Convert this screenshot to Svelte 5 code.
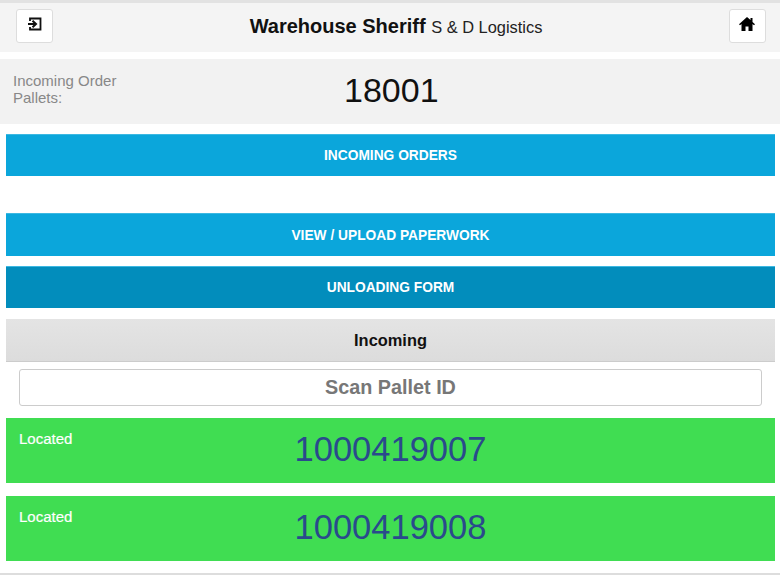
<script>
  const pallets = ['1000419007', '1000419008'];
</script>

<div class="page">
  <header class="topbar">
    <button class="icon-btn" aria-label="Log out">
      <svg width="16" height="16" viewBox="0 0 16 16">
        <path d="M3 5V2.500h10.500v11H3V11" fill="none" stroke="#111" stroke-width="1.8" />
        <path d="M1 8h7M5.500 4.800 9 8l-3.500 3.200" fill="none" stroke="#111" stroke-width="2" />
      </svg>
    </button>
    <h1><b>Warehouse Sheriff</b> <span>S &amp; D Logistics</span></h1>
    <button class="icon-btn" aria-label="Home">
      <svg width="16" height="14" viewBox="0 0 16 14">
        <path d="M8 0 0 7.200l1 1L2.500 7v7h4V9.500h3V14h4V7L15 8.200l1-1-2.500-2.300V1h-2v2.100z" fill="#000" />
      </svg>
    </button>
  </header>

  <section class="stat">
    <div class="stat-label">Incoming Order Pallets:</div>
    <div class="stat-value">18001</div>
  </section>

  <div class="content">
    <a class="btn first" href="#orders">INCOMING ORDERS</a>
    <a class="btn second" href="#paperwork">VIEW / UPLOAD PAPERWORK</a>
    <a class="btn active" href="#unloading">UNLOADING FORM</a>

    <div class="subhead">Incoming</div>

    <div class="scan">
      <input type="text" placeholder="Scan Pallet ID" />
    </div>

    {#each pallets as id}
      <div class="pallet">
        <span class="status">Located</span>
        <span class="pallet-id">{id}</span>
      </div>
    {/each}
  </div>

  <div class="rule"></div>
</div>

<style>
  :global(body) {
    background: #fff;
    font-family: "Liberation Sans", Arial, sans-serif;
  }

  .page {
    height: 576px;
    overflow: hidden;
  }

  .topbar {
    display: flex;
    align-items: center;
    justify-content: space-between;
    box-sizing: border-box;
    height: 52px;
    padding: 0 14px 3px 16px;
    background: #f4f4f4;
    border-top: 3px solid #e2e2e2;
  }

  .topbar h1 {
    margin: 0;
    padding-left: 10px;
    font-size: 20px;
    font-weight: normal;
    color: #111;
  }

  .topbar h1 b {
    font-weight: bold;
  }

  .topbar h1 span {
    font-size: 16.400px;
    color: #222;
  }

  .icon-btn {
    display: flex;
    align-items: center;
    justify-content: center;
    width: 37px;
    height: 34px;
    padding: 0 0 4px;
    background: #fff;
    border: 1px solid #ddd;
    border-radius: 3px;
  }

  .stat {
    display: flex;
    align-items: center;
    height: 65px;
    margin-top: 7px;
    padding: 0 13px;
    background: #f2f2f2;
  }

  .stat-label {
    width: 120px;
    font-size: 15px;
    line-height: 17px;
    color: #888;
    margin-top: -5px;
  }

  .stat-value {
    margin-left: 211px;
    margin-top: -2px;
    font-size: 34px;
    color: #111;
  }

  .content {
    display: flex;
    flex-direction: column;
    margin: 10px 5px 0 6px;
  }

  .btn {
    display: flex;
    align-items: center;
    justify-content: center;
    height: 42px;
    background: #0ba6db;
    border-top: 1px solid #3cb8e2;
    box-sizing: border-box;
    color: #fff;
    font-size: 13.750px;
    font-weight: bold;
    text-decoration: none;
  }

  .second {
    height: 43px;
    margin-top: 37px;
  }

  .active {
    margin-top: 10px;
    background: #028dbc;
  }

  .subhead {
    display: flex;
    align-items: center;
    justify-content: center;
    box-sizing: border-box;
    height: 43px;
    margin-top: 11px;
    background: linear-gradient(#e4e4e4, #dcdcdc);
    border-bottom: 1px solid #ccc;
    color: #111;
    font-size: 16.400px;
    font-weight: bold;
  }

  .scan {
    padding: 7px 13px 0;
  }

  .scan input {
    display: block;
    width: 100%;
    height: 37px;
    box-sizing: border-box;
    border: 1px solid #ccc;
    border-radius: 3px;
    background: #fff;
    font-family: inherit;
    font-size: 19.800px;
    font-weight: bold;
    text-align: center;
  }

  .scan input::placeholder {
    color: #777;
    opacity: 1;
  }

  .pallet {
    position: relative;
    display: flex;
    justify-content: center;
    box-sizing: border-box;
    height: 65px;
    margin-top: 12px;
    background: #40dd52;
  }

  .pallet + .pallet {
    margin-top: 13px;
  }

  .status {
    position: absolute;
    left: 13px;
    top: 12px;
    color: #fff;
    font-size: 15px;
    -webkit-text-stroke: 0.2px #fff;
  }

  .pallet-id {
    margin-top: 11px;
    font-size: 34.500px;
    line-height: 40px;
    color: #2a4a8c;
  }

  .rule {
    height: 2px;
    margin-top: 12px;
    background: #ddd;
  }
</style>
